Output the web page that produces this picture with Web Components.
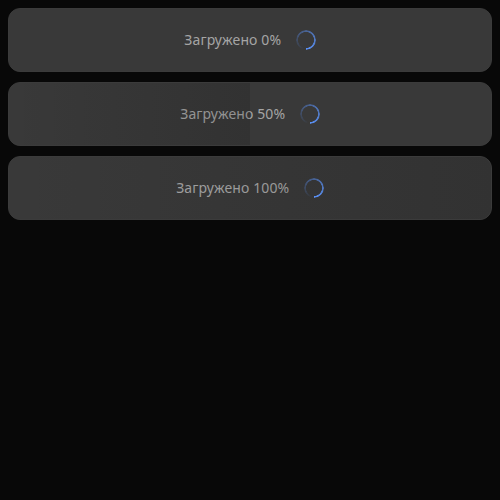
<!DOCTYPE html>
<html lang="ru">
<head>
<meta charset="utf-8">
<title>Загрузка</title>
<style>
html { background: #080808; }
body { margin: 8px; font-family: "Noto Sans", sans-serif; }
</style>
</head>
<body>
<loader-list>
  <progress-card value="0"></progress-card>
  <progress-card value="50"></progress-card>
  <progress-card value="100"></progress-card>
</loader-list>
<script>
customElements.define('loader-list', class extends HTMLElement {
  constructor() {
    super();
    this.attachShadow({ mode: 'open' }).innerHTML = `
      <style>:host { display: flex; flex-direction: column; gap: 10px; }</style>
      <slot></slot>`;
  }
});

customElements.define('ring-spinner', class extends HTMLElement {
  constructor() {
    super();
    this.attachShadow({ mode: 'open' }).innerHTML = `
      <style>
        :host {
          display: block; position: relative; width: 20px; height: 20px; border-radius: 50%; flex: none;
          background: conic-gradient(from 180deg, rgba(91,146,255,0) 3%, #5b92f8 100%);
          -webkit-mask: radial-gradient(circle closest-side, transparent 7.7px, #000 8.3px);
          mask: radial-gradient(circle closest-side, transparent 7.7px, #000 8.3px);
        }
      </style>`;
  }
});

customElements.define('progress-card', class extends HTMLElement {
  connectedCallback() {
    const value = Number(this.getAttribute('value'));
    this.attachShadow({ mode: 'open' }).innerHTML = `
      <style>
        :host {
          box-sizing: border-box; display: flex; align-items: center; justify-content: center;
          position: relative; height: 64px; overflow: hidden; gap: 14.5px;
          border: 1px solid #3b3b3b; border-radius: 12px; background: #393939;
        }
        .label {
          font-size: 14px; line-height: 20px; color: #a5a5a5; white-space: pre;
          letter-spacing: .12px;
        }
        .fill {
          position: absolute; left: 0; top: 0; bottom: 0; width: ${value}%;
          background: linear-gradient(90deg, rgba(8,8,8,0), rgba(8,8,8,.14));
        }
      </style>
      <span class="label">Загружено ${value}%</span>
      <div class="fill"></div>
      <ring-spinner></ring-spinner>`;
  }
});
</script>
</body>
</html>
